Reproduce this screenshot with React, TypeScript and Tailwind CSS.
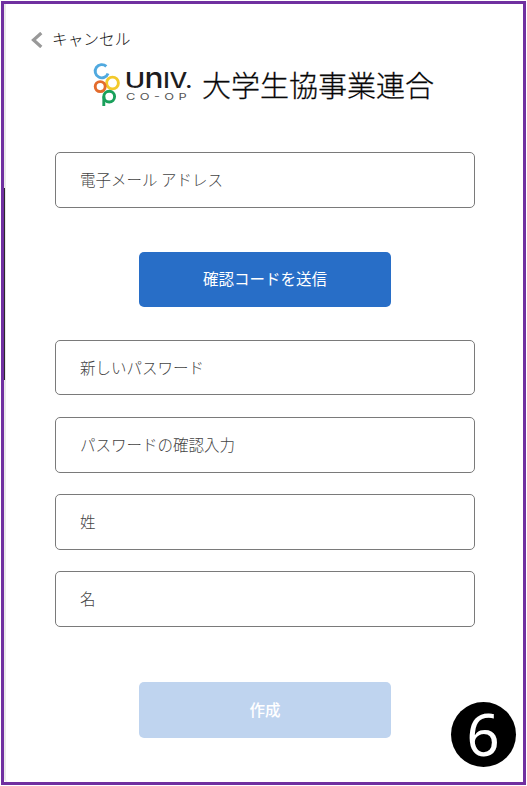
import React, { useState } from "react";

const textFields = [
  { name: "newPassword", type: "password", label: "新しいパスワード", gap: "mt-[33px] h-[55px]" },
  { name: "confirmPassword", type: "password", label: "パスワードの確認入力", gap: "mt-[22px] h-14" },
  { name: "surname", type: "text", label: "姓", gap: "mt-[21px] h-14" },
  { name: "givenName", type: "text", label: "名", gap: "mt-[21px] h-14" },
];

const inputClass =
  "block w-[420px] rounded-[5px] border border-[#7a7a7a] bg-white px-6 pb-[2px] text-[15.5px] font-light text-[#333] outline-none placeholder:text-[#444] placeholder:opacity-100";

const Logo = () => (
  <svg width="104" height="48" viewBox="90 61 104 48" className="shrink-0">
    <g fill="none" strokeWidth="2.9">
      <path d="M106.3 66.4 A6.6 6.6 0 1 0 108 73.4" stroke="#50a9df" />
      <circle cx="112.5" cy="83" r="5.9" stroke="#f3c92b" />
      <circle cx="100.2" cy="86.6" r="5" stroke="#e36b2c" />
      <circle cx="109.2" cy="96.6" r="5.4" stroke="#19a05b" />
      <path d="M103.8 96.5 V106" stroke="#19a05b" />
    </g>
    <g fill="#1d1d1f" fontFamily="Inter, sans-serif" fontWeight="500">
      <text x="124.8" y="88" fontSize="21.5" textLength="20.5" lengthAdjust="spacingAndGlyphs">U</text>
      <text x="144.6" y="88" fontSize="28" textLength="19" lengthAdjust="spacingAndGlyphs">n</text>
      <text x="163.6" y="88" fontSize="21.5" fontWeight="600">I</text>
      <text x="169.5" y="88" fontSize="21.5" textLength="23" lengthAdjust="spacingAndGlyphs">V.</text>
    </g>
    <g fill="#555" fontFamily="Inter, sans-serif" fontSize="9.5">
      <text transform="translate(126 99.8) scale(1.35 1)" textLength="45" lengthAdjust="spacing">
        CO-OP
      </text>
    </g>
  </svg>
);

const App = () => {
  const [email, setEmail] = useState("");

  return (
    <div className="h-[786px] w-[527px] overflow-hidden bg-white p-px font-['Noto_Sans_CJK_JP',sans-serif]">
      <div className="relative h-[784px] w-[525px] border-[3px] border-[#7030a0] bg-white">
        <div className="h-full rounded-bl-[4px] border-l-2 border-[#e9e9e9] pt-[22px]">
          <button className="ml-[25px] flex h-[26px] items-center text-[15.7px] font-light text-[#111]">
            <svg width="12" height="16" viewBox="0 0 12 16" className="mr-[9px] mt-[2px]">
              <path d="M10.3 1 L2.5 8 L10.3 15" fill="none" stroke="#999" strokeWidth="3.2" />
            </svg>
            キャンセル
          </button>

          <div className="ml-[84px] mt-[9px] flex h-12 items-center">
            <Logo />
            <h1 className="-mt-[3px] ml-[8px] whitespace-nowrap text-[29px] font-light leading-[48px] text-black [-webkit-text-stroke:0.3px_#222]">
              大学生協事業連合
            </h1>
          </div>

          <form className="ml-[49px] mt-[43px] w-[420px]" onSubmit={(e) => e.preventDefault()}>
            <input
              type="email"
              value={email}
              onChange={(e) => setEmail(e.target.value)}
              placeholder="電子メール アドレス"
              className={`${inputClass} h-14`}
            />
            <button
              type="button"
              className="mx-auto mt-11 block h-[55px] w-[252px] rounded-[5px] bg-[#286ec7] pb-[2px] text-[15.5px] text-white"
            >
              確認コードを送信
            </button>
            {textFields.map((field) => (
              <input
                key={field.name}
                type={field.type}
                name={field.name}
                placeholder={field.label}
                className={`${inputClass} ${field.gap}`}
              />
            ))}
            <button
              type="submit"
              disabled
              className="mx-auto mt-[55px] block h-14 w-[252px] rounded-[5px] bg-[#bfd4ef] text-[15.5px] font-medium text-white"
            >
              作成
            </button>
          </form>
        </div>

        {/* page edge showing behind the dialog */}
        <div className="absolute left-0 top-[184px] h-[192px] w-px bg-[#2b2b2b]" />

        <div className="absolute bottom-[15px] right-[7px] flex size-[65px] items-center justify-center rounded-full bg-black pr-[1px] font-['Noto_Sans',sans-serif] text-[58px] leading-none text-white">
          <span className="-mt-[1px]">6</span>
        </div>
      </div>
    </div>
  );
};

export default App;
